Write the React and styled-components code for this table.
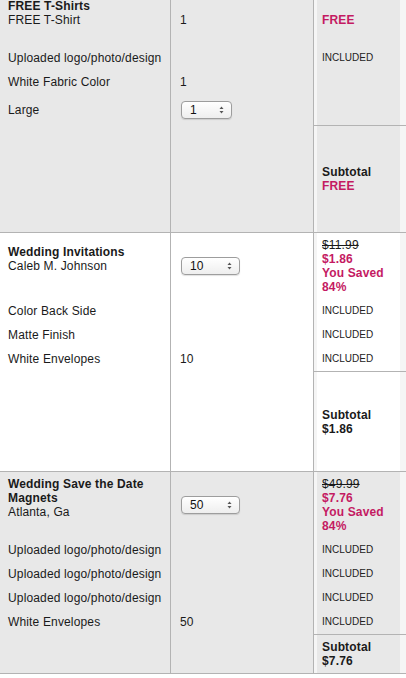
import React from 'react';
import styled, { createGlobalStyle } from 'styled-components';

const GlobalStyle = createGlobalStyle`
  html, body {
    margin: 0;
    padding: 0;
    background: #ffffff;
    overflow: hidden;
  }
  body {
    font-family: 'Liberation Sans', Arial, Helvetica, sans-serif;
    font-size: 12px;
    letter-spacing: 0.15px;
    color: #1a1a1a;
  }
`;

const PINK = '#c41a62';
const LINE = '#b3b3b3';

const Cart = styled.div`
  width: 406px;
  margin-top: -6px;
`;

const Product = styled.div`
  display: grid;
  grid-template-columns: 171px 143px 1fr;
  background: ${props => (props.$shaded ? '#e8e8e8' : '#ffffff')};
  border-bottom: 1px solid ${LINE};
`;

const Cell = styled.div`
  box-sizing: border-box;
  display: flex;
  flex-direction: column;
  justify-content: center;
  line-height: 14px;
  min-height: ${props => props.$h || 24}px;
`;

const ItemCell = styled(Cell)`
  padding: ${props => (props.$head ? '5px 8px 19px' : '5px 8px')};
  border-right: 1px solid ${LINE};
`;

const QtyCell = styled(Cell)`
  padding: 5px 9px;
  border-right: 1px solid ${LINE};
  align-items: flex-start;
`;

const PriceCell = styled(Cell)`
  padding: 5px 8px;
  border-top: ${props => (props.$subtotal ? `1px solid ${LINE}` : 'none')};
  box-shadow: inset 3px 0 0 transparent, inset 3px 0 0 ${props => props.$edge},
    inset -6px 0 0 ${props => props.$edge};
`;

const Title = styled.div`
  font-weight: bold;
`;

const Pink = styled.div`
  color: ${PINK};
  font-weight: bold;
`;

const Struck = styled.div`
  text-decoration: line-through;
  color: #1a1a1a;
`;

const Included = styled.div`
  font-size: 10px;
  color: #222;
  letter-spacing: 0;
`;

const Bold = styled.div`
  font-weight: bold;
`;

const SelectWrap = styled.span`
  position: relative;
  display: inline-block;
  margin-left: 1px;
`;

const Select = styled.select`
  appearance: none;
  -webkit-appearance: none;
  box-sizing: border-box;
  width: ${props => props.$w}px;
  height: 18px;
  margin: 0;
  padding: 0 0 0 8px;
  border: 1px solid #9d9d9d;
  border-radius: 4px;
  background: linear-gradient(#ffffff, #eeeeee);
  box-shadow: 0 1px 1px rgba(0, 0, 0, 0.12);
  font-family: 'Liberation Sans', Arial, sans-serif;
  font-size: 12px;
  color: #111;
  line-height: 16px;
`;

const Arrows = styled.svg`
  position: absolute;
  right: 8px;
  top: 5px;
  pointer-events: none;
`;

const QtySelect = ({ value, width }) => (
  <SelectWrap>
    <Select $w={width} defaultValue={value}>
      <option value={value}>{value}</option>
    </Select>
    <Arrows width="5" height="8" viewBox="0 0 5 8">
      <path d="M2.5 0.5 L4.5 3 L0.5 3 Z" fill="#555" />
      <path d="M2.5 7.5 L4.5 5 L0.5 5 Z" fill="#555" />
    </Arrows>
  </SelectWrap>
);

const products = [
  {
    shaded: true,
    title: 'FREE T-Shirts',
    subtitle: 'FREE T-Shirt',
    qty: '1',
    free: true,
    options: [
      { label: 'Uploaded logo/photo/design', qty: '', included: true },
      { label: 'White Fabric Color', qty: '1', included: false },
      { label: 'Large', select: '1', selectWidth: 51, included: false },
    ],
    subtotal: 'FREE',
    subtotalHeight: 106,
  },
  {
    shaded: false,
    title: 'Wedding Invitations',
    subtitle: 'Caleb M. Johnson',
    select: '10',
    selectWidth: 59,
    was: '$11.99',
    now: '$1.86',
    saved: '84%',
    options: [
      { label: 'Color Back Side', qty: '', included: true },
      { label: 'Matte Finish', qty: '', included: true },
      { label: 'White Envelopes', qty: '10', included: true },
    ],
    subtotal: '$1.86',
    subtotalHeight: 99,
  },
  {
    shaded: true,
    title: 'Wedding Save the Date Magnets',
    subtitle: 'Atlanta, Ga',
    select: '50',
    selectWidth: 59,
    was: '$49.99',
    now: '$7.76',
    saved: '84%',
    options: [
      { label: 'Uploaded logo/photo/design', qty: '', included: true },
      { label: 'Uploaded logo/photo/design', qty: '', included: true },
      { label: 'Uploaded logo/photo/design', qty: '', included: true },
      { label: 'White Envelopes', qty: '50', included: true },
    ],
    subtotal: '$7.76',
    subtotalHeight: 38,
  },
];

const ProductRow = ({ p }) => {
  const edge = p.shaded ? 'rgba(255,255,255,0.55)' : 'rgba(0,0,0,0.04)';
  return (
    <Product $shaded={p.shaded}>
      <ItemCell $head>
        <Title>{p.title}</Title>
        <div>{p.subtitle}</div>
      </ItemCell>
      <QtyCell>
        {p.select ? <QtySelect value={p.select} width={p.selectWidth} /> : p.qty}
      </QtyCell>
      <PriceCell $edge={edge}>
        {p.free ? (
          <Pink>FREE</Pink>
        ) : (
          <>
            <Struck>{p.was}</Struck>
            <Pink>{p.now}</Pink>
            <Pink>You Saved</Pink>
            <Pink>{p.saved}</Pink>
          </>
        )}
      </PriceCell>

      {p.options.map((o, i) => (
        <React.Fragment key={i}>
          <ItemCell $h={o.select ? 31 : 24}>{o.label}</ItemCell>
          <QtyCell $h={o.select ? 31 : 24}>
            {o.select ? <QtySelect value={o.select} width={o.selectWidth} /> : o.qty}
          </QtyCell>
          <PriceCell $h={o.select ? 31 : 24} $edge={edge}>
            {o.included && <Included>INCLUDED</Included>}
          </PriceCell>
        </React.Fragment>
      ))}

      <ItemCell $h={p.subtotalHeight + 1} />
      <QtyCell $h={p.subtotalHeight + 1} />
      <PriceCell $h={p.subtotalHeight + 1} $subtotal $edge={edge}>
        <Bold>Subtotal</Bold>
        {p.free ? <Pink>{p.subtotal}</Pink> : <Bold>{p.subtotal}</Bold>}
      </PriceCell>
    </Product>
  );
};

export default function App() {
  return (
    <>
      <GlobalStyle />
      <Cart>
        {products.map((p, i) => (
          <ProductRow key={i} p={p} />
        ))}
      </Cart>
    </>
  );
}
